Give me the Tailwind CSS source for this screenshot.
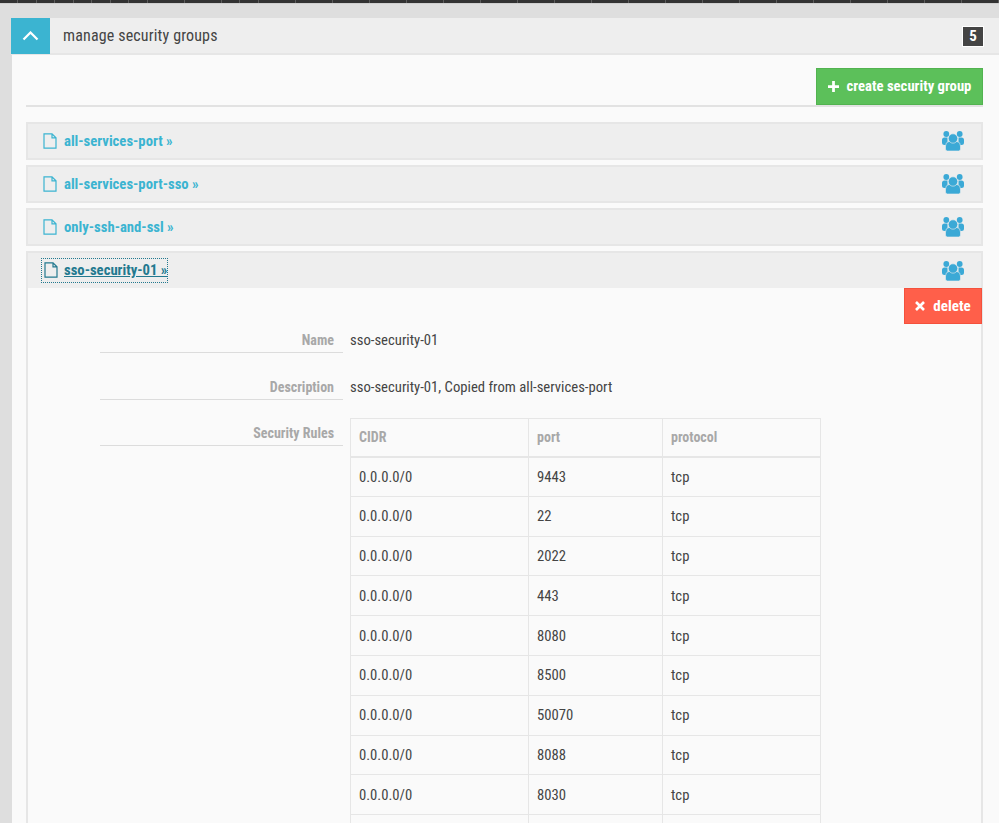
<!DOCTYPE html>
<html lang="en">
<head>
    <meta charset="UTF-8">
    <title>manage security groups</title>
    <script src="https://cdn.jsdelivr.net/npm/@tailwindcss/browser@4"></script>
</head>
<body class="bg-[#dedede] font-['Roboto',sans-serif] text-[#444]">
    <svg class="hidden">
        <symbol id="file" viewBox="0 0 14 16"><path d="M1 .8h8l4 4v10.400H1zM9 .8v4h4" fill="none" stroke="currentColor" stroke-width="1.200"/></symbol>
        <symbol id="users" viewBox="0 0 22 20">
            <circle cx="4.300" cy="3" r="2.900"/><circle cx="17.700" cy="3" r="2.900"/>
            <path d="M2.500 6.500h3v7.500H2.500Q0 14 0 11.500V9Q0 6.500 2.500 6.500zM16.500 6.500h3Q22 6.500 22 9v2.500q0 2.500-2.500 2.500h-3z"/>
            <g stroke="#eeeeee" stroke-width=".6">
                <path d="M7 10.500h8q3.500.5 3.500 4.500v3q0 2-2 2h-11q-2 0-2-2v-3q0-4 3.500-4.500z"/>
                <circle cx="11" cy="7.500" r="4.700"/>
            </g>
        </symbol>
    </svg>
    <div class="h-[823px] overflow-hidden">
        <!-- top bar -->
        <div class="h-[3px] bg-[repeating-linear-gradient(90deg,#333_0,#333_17.500px,#5c5c5c_17.500px,#5c5c5c_18.500px)]"></div>
        <div class="h-px bg-[#cfcfcf]"></div>
        <div class="h-[14px]"></div>

        <div class="ml-3 bg-[#fafafa] h-[805px]">
            <!-- panel header -->
            <div class="h-[37px] -ml-px bg-[#eeeeee] border-b-2 border-[#e6e6e6] flex items-start pr-[15px]">
                <button class="w-[39px] h-9 bg-[#3bb4d1] flex items-center justify-center shrink-0">
                    <svg width="17" height="10" viewBox="0 0 17 10" fill="none" stroke="white" stroke-width="2.200"><path d="M1.500 8.500l7-7 7 7"/></svg>
                </button>
                <span class="ml-[13px] mt-[6px] text-base font-stretch-semi-condensed tracking-[0.15px] text-[#444]">manage security groups</span>
                <span class="ml-auto mt-2 w-[22px] h-[21px] bg-[#444] border border-white text-white text-[15px] font-bold font-stretch-condensed flex items-center justify-center">5</span>
            </div>

            <div class="pl-[14px] pr-4">
                <!-- toolbar -->
                <div class="flex justify-end border-b-2 border-[#e2e2e2] h-[39px] mt-[13px]">
                    <button class="w-[167px] h-[37px] bg-[#5cc05a] border border-[#52b350] text-white text-[14.700px] font-bold font-stretch-condensed flex items-center justify-center gap-2">
                        <svg width="11" height="11" viewBox="0 0 12 12" fill="white"><path d="M4.500 0h3v4.500H12v3H7.500V12h-3V7.500H0v-3h4.500z"/></svg>
                        create security group
                    </button>
                </div>

                <!-- groups -->
                <div class="mt-[15px] flex flex-col gap-[5px]">
                    <div class="h-[38px] bg-[#eeeeee] border-2 border-[#e6e6e6] flex items-center pl-[15px] pr-[17px] text-[#3bb4d1]">
                        <svg class="w-[14px] h-4"><use href="#file"/></svg>
                        <a class="ml-[7px] text-[14.700px] font-bold font-stretch-condensed">all-services-port »</a>
                        <svg class="ml-auto w-[22px] h-5 fill-[#3ba9d6]"><use href="#users"/></svg>
                    </div>
                    <div class="h-[38px] bg-[#eeeeee] border-2 border-[#e6e6e6] flex items-center pl-[15px] pr-[17px] text-[#3bb4d1]">
                        <svg class="w-[14px] h-4"><use href="#file"/></svg>
                        <a class="ml-[7px] text-[14.700px] font-bold font-stretch-condensed">all-services-port-sso »</a>
                        <svg class="ml-auto w-[22px] h-5 fill-[#3ba9d6]"><use href="#users"/></svg>
                    </div>
                    <div class="h-[38px] bg-[#eeeeee] border-2 border-[#e6e6e6] flex items-center pl-[15px] pr-[17px] text-[#3bb4d1]">
                        <svg class="w-[14px] h-4"><use href="#file"/></svg>
                        <a class="ml-[7px] text-[14.700px] font-bold font-stretch-condensed">only-ssh-and-ssl »</a>
                        <svg class="ml-auto w-[22px] h-5 fill-[#3ba9d6]"><use href="#users"/></svg>
                    </div>

                    <!-- open group -->
                    <div class="border-x-2 border-[#e6e6e6]">
                        <div class="-mx-[2px] h-[37px] bg-[#eeeeee] border-x-2 border-t-2 border-[#e6e6e6] flex items-center pl-[14px] pr-[17px] text-[#23798f]">
                            <div class="flex items-center outline-1 outline-dotted outline-[#23798f] underline">
                                <svg class="w-[14px] h-4 ml-[2px]"><use href="#file"/></svg>
                                <a class="ml-[6px] text-[14.700px] font-bold font-stretch-condensed">sso-security-01 »</a>
                            </div>
                            <svg class="ml-auto w-[22px] h-5 fill-[#3ba9d6]"><use href="#users"/></svg>
                        </div>
                        <div class="flex justify-end">
                            <button class="w-[78px] -mr-px h-9 bg-[#ff5f4a] border border-[#f4513c] text-white text-[15px] font-bold font-stretch-condensed flex items-center justify-center gap-2">
                                <svg width="10" height="10" viewBox="0 0 10 10" stroke="white" stroke-width="2.600"><path d="M1 1l8 8M9 1l-8 8"/></svg>
                                delete
                            </button>
                        </div>

                        <!-- details -->
                        <div class="pl-[72px]">
                            <div class="flex">
                                <div class="w-[243px] h-[29px] border-b border-[#dcdcdc] pr-[9px] text-right text-sm font-bold font-stretch-condensed text-[#a8a8a8] leading-[33px]">Name</div>
                                <div class="ml-[7px] text-[14.700px] font-stretch-semi-condensed leading-[33px]">sso-security-01</div>
                            </div>
                            <div class="flex mt-[14px]">
                                <div class="w-[243px] h-[29px] border-b border-[#dcdcdc] pr-[9px] text-right text-sm font-bold font-stretch-condensed text-[#a8a8a8] leading-[33px]">Description</div>
                                <div class="ml-[7px] text-[14.700px] font-stretch-semi-condensed leading-[33px]">sso-security-01, Copied from all-services-port</div>
                            </div>
                            <div class="flex mt-[13px]">
                                <div class="w-[243px] h-[29px] border-b border-[#dcdcdc] pr-[9px] text-right text-sm font-bold font-stretch-condensed text-[#a8a8a8] leading-[33px]">Security Rules</div>
                                <table class="ml-[7px] mt-px w-[471px] table-fixed border-collapse text-[14.700px] font-stretch-semi-condensed">
                                    <thead>
                                        <tr class="h-[38px] text-left text-sm font-bold font-stretch-condensed text-[#a8a8a8] border-b-2 border-[#e6e6e6]">
                                            <th class="w-[178px] px-2 border border-[#e6e6e6] border-b-2">CIDR</th>
                                            <th class="w-[134px] px-2 border border-[#e6e6e6] border-b-2">port</th>
                                            <th class="px-2 border border-[#e6e6e6] border-b-2">protocol</th>
                                        </tr>
                                    </thead>
                                    <tbody>
                                        <tr class="h-[39.800px]"><td class="px-2 border border-[#e6e6e6]">0.0.0.0/0</td><td class="px-2 border border-[#e6e6e6]">9443</td><td class="px-2 border border-[#e6e6e6]">tcp</td></tr>
                                        <tr class="h-[39.800px]"><td class="px-2 border border-[#e6e6e6]">0.0.0.0/0</td><td class="px-2 border border-[#e6e6e6]">22</td><td class="px-2 border border-[#e6e6e6]">tcp</td></tr>
                                        <tr class="h-[39.800px]"><td class="px-2 border border-[#e6e6e6]">0.0.0.0/0</td><td class="px-2 border border-[#e6e6e6]">2022</td><td class="px-2 border border-[#e6e6e6]">tcp</td></tr>
                                        <tr class="h-[39.800px]"><td class="px-2 border border-[#e6e6e6]">0.0.0.0/0</td><td class="px-2 border border-[#e6e6e6]">443</td><td class="px-2 border border-[#e6e6e6]">tcp</td></tr>
                                        <tr class="h-[39.800px]"><td class="px-2 border border-[#e6e6e6]">0.0.0.0/0</td><td class="px-2 border border-[#e6e6e6]">8080</td><td class="px-2 border border-[#e6e6e6]">tcp</td></tr>
                                        <tr class="h-[39.800px]"><td class="px-2 border border-[#e6e6e6]">0.0.0.0/0</td><td class="px-2 border border-[#e6e6e6]">8500</td><td class="px-2 border border-[#e6e6e6]">tcp</td></tr>
                                        <tr class="h-[39.800px]"><td class="px-2 border border-[#e6e6e6]">0.0.0.0/0</td><td class="px-2 border border-[#e6e6e6]">50070</td><td class="px-2 border border-[#e6e6e6]">tcp</td></tr>
                                        <tr class="h-[39.800px]"><td class="px-2 border border-[#e6e6e6]">0.0.0.0/0</td><td class="px-2 border border-[#e6e6e6]">8088</td><td class="px-2 border border-[#e6e6e6]">tcp</td></tr>
                                        <tr class="h-[39.800px]"><td class="px-2 border border-[#e6e6e6]">0.0.0.0/0</td><td class="px-2 border border-[#e6e6e6]">8030</td><td class="px-2 border border-[#e6e6e6]">tcp</td></tr>
                                        <tr class="h-[39.800px]"><td class="px-2 border border-[#e6e6e6]"></td><td class="px-2 border border-[#e6e6e6]"></td><td class="px-2 border border-[#e6e6e6]"></td></tr>
                                    </tbody>
                                </table>
                            </div>
                        </div>
                    </div>
                </div>
            </div>
        </div>
    </div>
</body>
</html>
